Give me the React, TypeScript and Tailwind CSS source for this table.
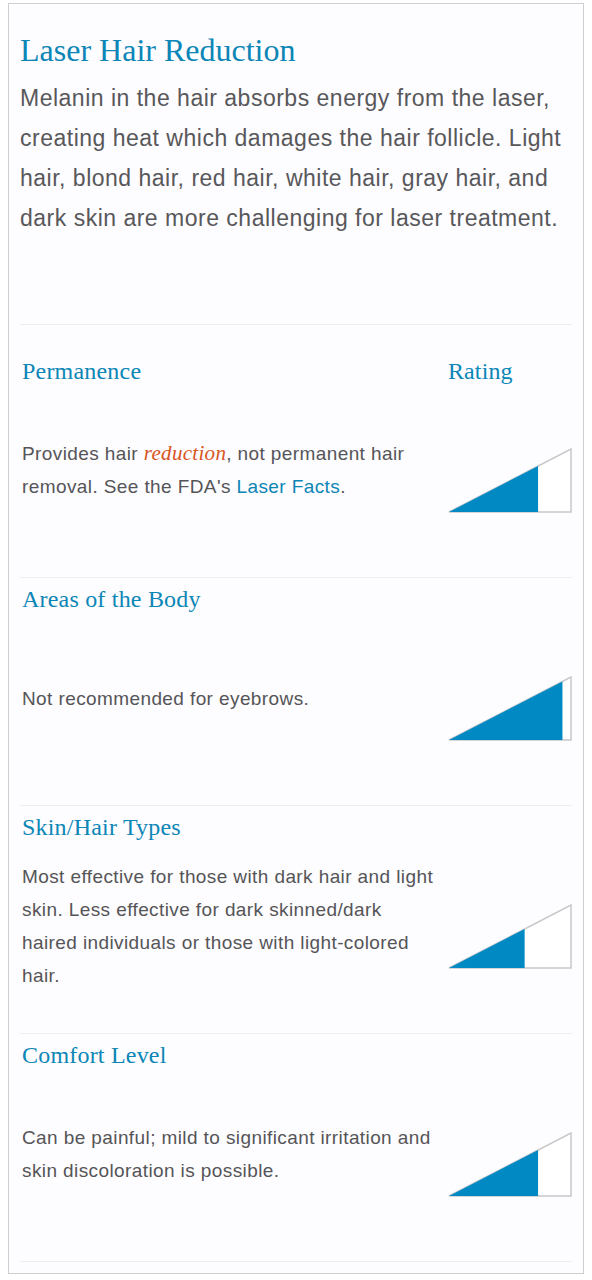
import React from "react";

const sans = { fontFamily: '"Liberation Sans", Arial, sans-serif' };
const serif = { fontFamily: '"Liberation Serif", Georgia, serif' };

function Ramp({ fill }: { fill: number }) {
  const w = 122;
  const h = 63;
  const fx = w * fill;
  const fy = h - (fx * h) / w;
  return (
    <svg width="124" height="65" viewBox="-1 -1 124 65" className="block">
      <polygon points={`0,${h} ${w},0 ${w},${h}`} fill="#ffffff" stroke="#c8c8cb" strokeWidth="1.5" />
      <polygon points={`0,${h} ${fx},${fy} ${fx},${h}`} fill="#0089c3" />
    </svg>
  );
}

interface SectionProps {
  title: string;
  fill: number;
  first?: boolean;
  children: React.ReactNode;
}

function Section({ title, fill, first, children }: SectionProps) {
  return (
    <div className={`border-b border-[#ececf1] ${first ? "h-[253px] pt-[25px]" : "h-[228px]"}`}>
      <div className="flex h-[42px] items-center pl-[2px]">
        <h3 className="w-[426px] text-[24px] leading-[28px] tracking-[0.2px] text-[#0b86b6]" style={serif}>
          {title}
        </h3>
        {first && (
          <span className="text-[24px] leading-[28px] tracking-[0.1px] text-[#0b86b6]" style={serif}>
            Rating
          </span>
        )}
      </div>
      <div className="flex h-[156px] items-center pl-[2px]">
        <p className="w-[426px] pr-[6px] text-[19px] leading-[33px] tracking-[0.4px] text-[#555558]" style={sans}>
          {children}
        </p>
        <div className="mt-[20px]">
          <Ramp fill={fill} />
        </div>
      </div>
    </div>
  );
}

export default function App() {
  return (
    <div className="min-h-[1280px] bg-white pl-[8px] pr-[8px] pt-[3px]">
      <div className="h-[1271px] border border-[#cfcfd2] bg-[#fdfcfe] px-[11px] pt-[28px]">
        <div className="h-[293px] border-b border-[#ececf1]">
          <h2 className="text-[32px] leading-[36px] text-[#0b86b6]" style={serif}>
            Laser Hair Reduction
          </h2>
          <p className="mt-[10px] text-[23px] leading-[40px] tracking-[0.5px] text-[#58585b]" style={sans}>
            Melanin in the hair absorbs energy from the laser, creating heat which damages the hair follicle. Light
            hair, blond hair, red hair, white hair, gray hair, and dark skin are more challenging for laser treatment.
          </p>
        </div>
        <Section title="Permanence" fill={0.73} first>
          Provides hair{" "}
          <em className="text-[21px] leading-[33px] tracking-[0.3px] text-[#d9541f]" style={serif}>
            reduction
          </em>
          , not permanent hair removal. See the FDA's <span className="text-[#0b86b6]">Laser Facts</span>.
        </Section>
        <Section title="Areas of the Body" fill={0.93}>
          Not recommended for eyebrows.
        </Section>
        <Section title="Skin/Hair Types" fill={0.62}>
          Most effective for those with dark hair and light skin. Less effective for dark skinned/dark haired
          individuals or those with light-colored hair.
        </Section>
        <Section title="Comfort Level" fill={0.73}>
          Can be painful; mild to significant irritation and skin discoloration is possible.
        </Section>
      </div>
    </div>
  );
}
